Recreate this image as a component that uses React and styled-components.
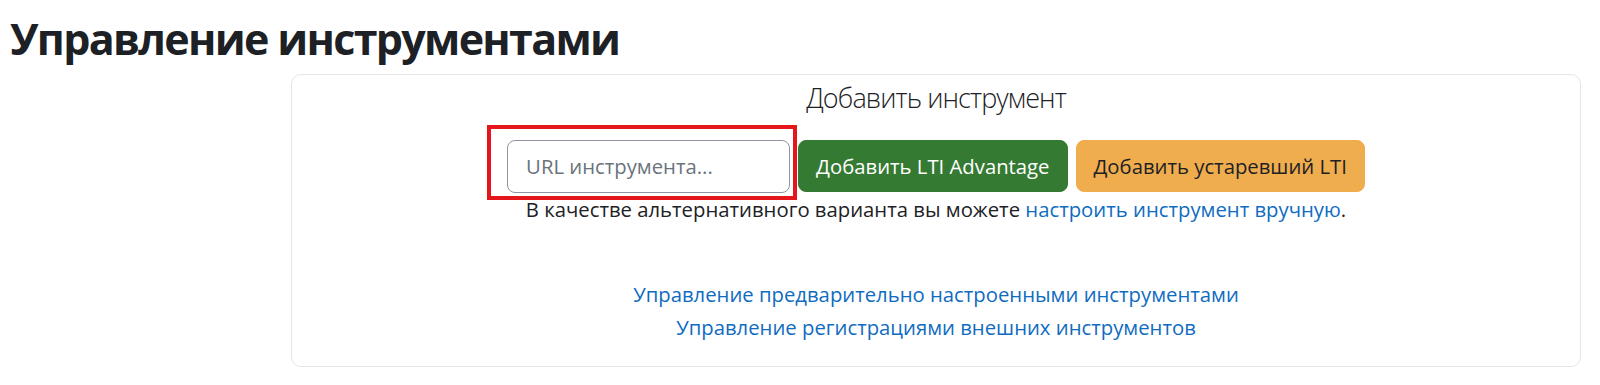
import React from "react";
import styled, { createGlobalStyle } from "styled-components";

const Global = createGlobalStyle`
  html, body { margin: 0; padding: 0; background: #fff; }
  body {
    font-family: "Open Sans", "Noto Sans", sans-serif;
    color: #1d2125;
    font-size: 20.3px;
  }
  * { box-sizing: border-box; }
`;

const Page = styled.div`
  padding: 0 19px 0 10px;
`;

const Heading = styled.h1`
  margin: 13px 0 9px 0;
  font-size: 43px;
  line-height: 1.2;
  font-weight: 700;
  letter-spacing: -1.7px;
  color: #1d2125;
`;

const Card = styled.section`
  margin-left: 281px;
  border: 1px solid #e6e6e6;
  border-radius: 10px;
  padding: 7px 16px 22px;
  display: flex;
  flex-direction: column;
  align-items: center;
`;

const Title = styled.h5`
  margin: 0;
  font-size: 27px;
  line-height: 1.2;
  font-weight: 300;
  letter-spacing: -0.9px;
  color: #1d2125;
`;

const Row = styled.div`
  margin-top: 26px;
  display: flex;
  align-items: center;
  gap: 8px;
`;

const InputWrap = styled.div`
  position: relative;
`;

const Highlight = styled.span`
  position: absolute;
  left: -20px;
  right: -7px;
  top: -15px;
  bottom: -7px;
  border: 4px solid #e5151c;
  pointer-events: none;
`;

const UrlInput = styled.input`
  display: block;
  width: 283px;
  height: 53px;
  padding: 0 18px;
  border: 1px solid #8f959e;
  border-radius: 8px;
  font-family: inherit;
  font-size: 20.3px;
  color: #1d2125;
  &::placeholder { color: #6a737b; }
`;

const Button = styled.button`
  height: 52px;
  padding: 0 17px;
  border: 1px solid ${(p) => p.$border};
  border-radius: 8px;
  background: ${(p) => p.$bg};
  color: ${(p) => p.$fg};
  font-family: inherit;
  font-size: 20.3px;
  white-space: nowrap;
`;

const Note = styled.p`
  margin: 0;
  line-height: 33px;
`;

const Link = styled.a`
  color: #0f6cbf;
  text-decoration: none;
`;

const Links = styled.div`
  margin-top: 52px;
  display: flex;
  flex-direction: column;
  align-items: center;
  line-height: 33px;
`;

export default function App() {
  return (
    <>
      <Global />
      <Page>
        <Heading>Управление инструментами</Heading>
        <Card>
          <Title>Добавить инструмент</Title>
          <Row>
            <InputWrap>
              <UrlInput placeholder="URL инструмента..." />
              <Highlight />
            </InputWrap>
            <Button $bg="#357a32" $border="#357a32" $fg="#ffffff">
              Добавить LTI Advantage
            </Button>
            <Button $bg="#f0ad4e" $border="#f0ad4e" $fg="#1d2125">
              Добавить устаревший LTI
            </Button>
          </Row>
          <Note>
            В качестве альтернативного варианта вы можете{" "}
            <Link href="#">настроить инструмент вручную</Link>.
          </Note>
          <Links>
            <Link href="#">Управление предварительно настроенными инструментами</Link>
            <Link href="#">Управление регистрациями внешних инструментов</Link>
          </Links>
        </Card>
      </Page>
    </>
  );
}
